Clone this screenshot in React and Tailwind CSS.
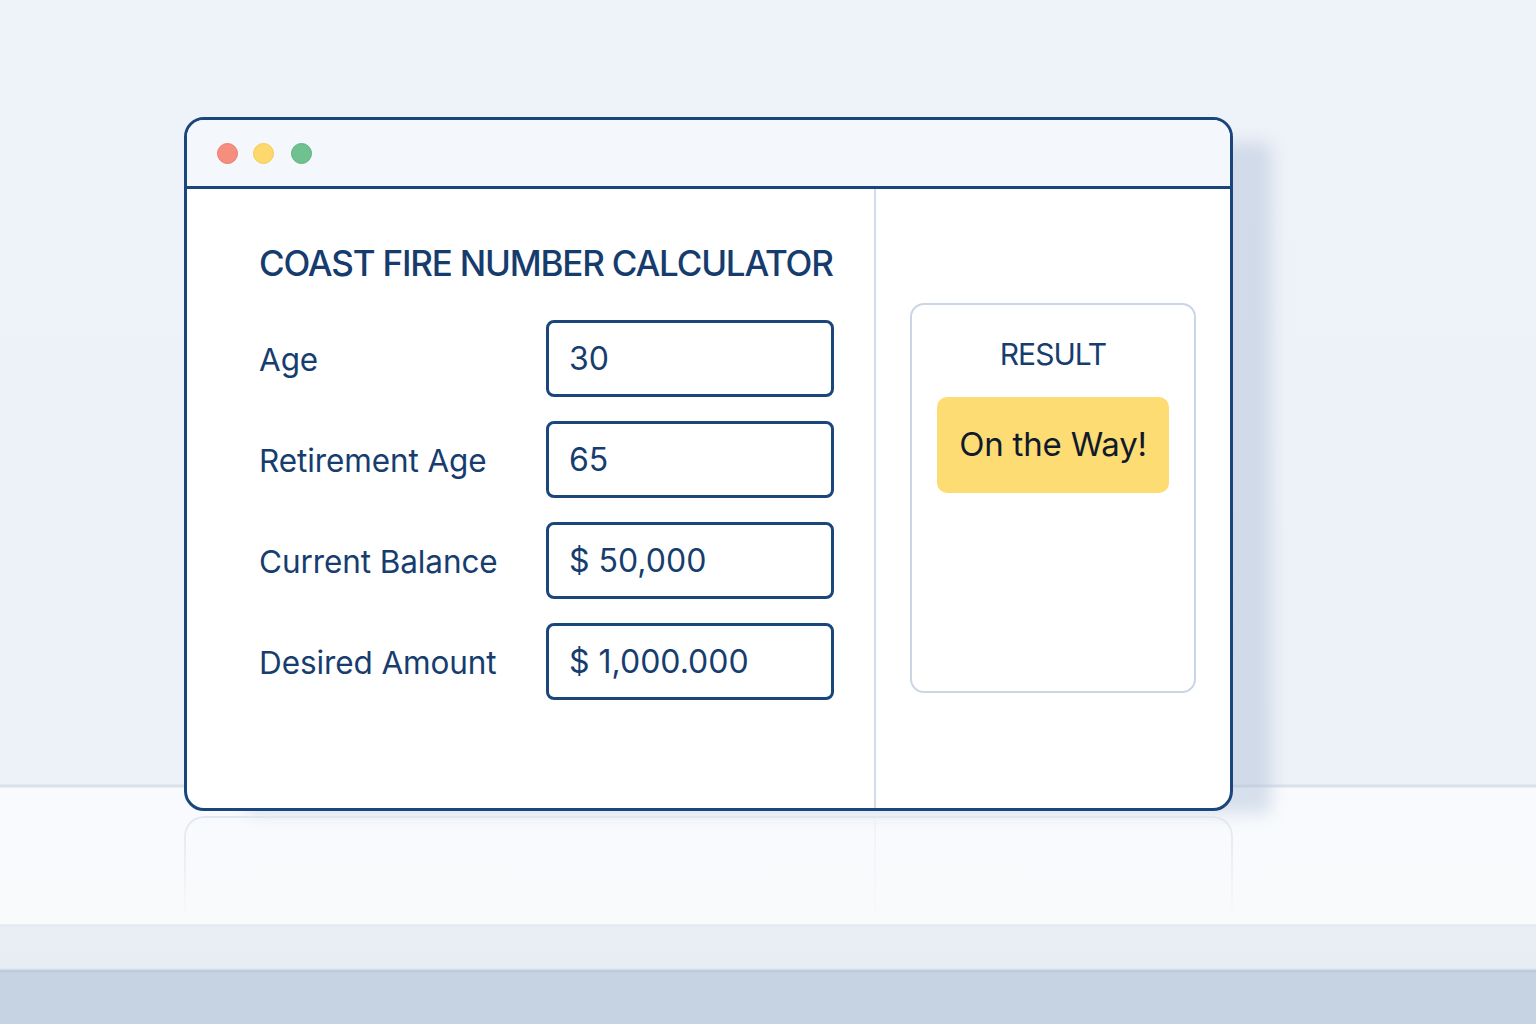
const fields = [
  { label: 'Age', value: '30' },
  { label: 'Retirement Age', value: '65' },
  { label: 'Current Balance', value: '$ 50,000' },
  { label: 'Desired Amount', value: '$ 1,000.000' },
];

const App = () => {
  return (
    <div
      className="w-[1536px] h-[1024px] overflow-hidden font-['Inter','Noto_Sans',sans-serif] bg-[linear-gradient(to_bottom,#eef2f9_0px,#edf1f8_784px,#d9e1eb_785px,#d9e1eb_787px,#f8fafd_788px,#f8fafc_924px,#dfe6ef_925px,#e9eef5_927px,#e8edf4_968px,#dde4ee_969px,#b7c5d8_971px,#c6d3e2_973px,#c6d3e2_1024px)]"
    >
      <div className="pt-[117px] pl-[184px]">
        {/* Window */}
        <div className="w-[1049px] h-[694px] bg-white border-[3px] border-[#1b467c] rounded-[20px] overflow-hidden flex flex-col shadow-[50px_14px_16px_-12px_rgba(172,190,214,0.45)]">
          <div className="h-[69px] shrink-0 bg-[#f4f7fb] border-b-[3px] border-[#1b467c] flex items-center pl-[30px]">
            <span className="w-[21px] h-[21px] rounded-full bg-[#f58e7f] border border-[#ec7a6c]"></span>
            <span className="w-[21px] h-[21px] rounded-full bg-[#fdd86c] border border-[#f3ca55] ml-[15px]"></span>
            <span className="w-[21px] h-[21px] rounded-full bg-[#6fc18f] border border-[#5db27d] ml-[17px]"></span>
          </div>

          <div className="flex flex-1">
            {/* Form column */}
            <div className="w-[687px] shrink-0 pl-[72px] pt-[52px]">
              <h1 className="text-[35px] leading-[44px] font-medium text-[#163c6e] tracking-[-1.2px] whitespace-nowrap">
                COAST FIRE NUMBER CALCULATOR
              </h1>
              <div className="mt-[35px] flex flex-col gap-[24px]">
                {fields.map((f) => (
                  <div key={f.label} className="flex items-center h-[77px]">
                    <span className="w-[287px] text-[31.5px] leading-[40px] pt-[3px] text-[#173d6f] tracking-[-0.1px]">{f.label}</span>
                    <div className="w-[288px] h-[77px] border-[3px] border-[#1b467c] rounded-[8px] flex items-center pl-[20px] text-[32px] text-[#173d6f]">
                      {f.value}
                    </div>
                  </div>
                ))}
              </div>
            </div>

            <div className="w-[2px] bg-[#d3dce8]"></div>

            {/* Result column */}
            <div className="flex-1 pl-[34px] pt-[114px]">
              <div className="w-[286px] h-[390px] border-2 border-[#cad6e6] rounded-[14px] flex flex-col items-center pt-[27px]">
                <div className="text-[30px] text-[#173d6f] tracking-[-1px]">RESULT</div>
                <div className="mt-[20px] w-[232px] h-[96px] bg-[#fddc74] rounded-[10px] flex items-center justify-center text-[33px] text-[#111a2b] tracking-[-0.2px]">
                  On the Way!
                </div>
              </div>
            </div>
          </div>
        </div>

        {/* Reflection */}
        <div className="mt-[5px] w-[1049px] h-[100px] border-2 border-b-0 border-[#e1e7ef] rounded-t-[20px] flex [mask-image:linear-gradient(to_bottom,black,transparent)]">
          <div className="w-[688px]"></div>
          <div className="w-[2px] bg-[#eef2f7]"></div>
        </div>
      </div>
    </div>
  );
};

export default App;
